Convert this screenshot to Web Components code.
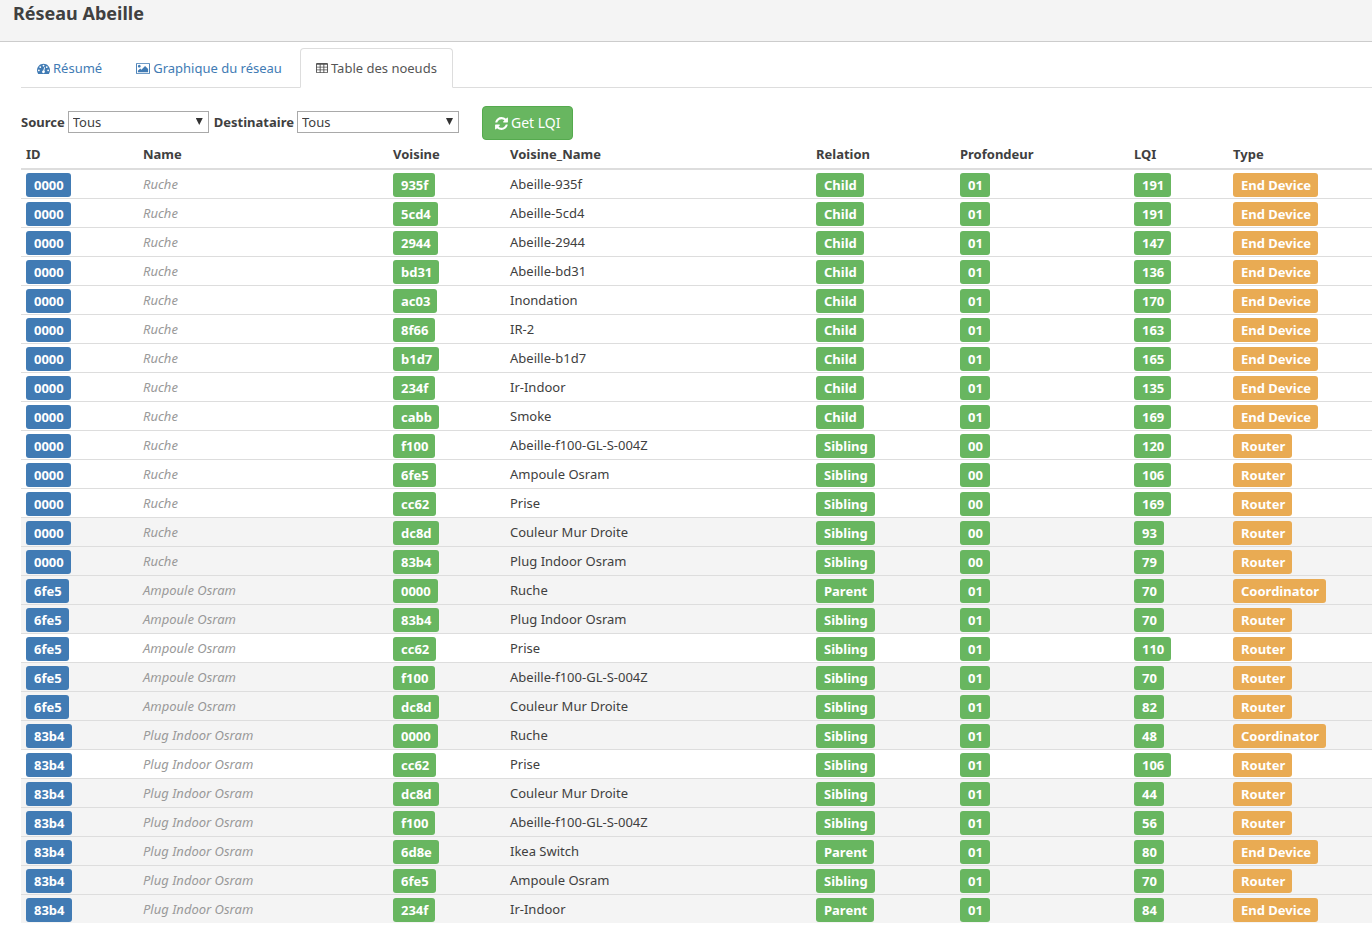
<!DOCTYPE html>
<html lang="fr">
<head>
<meta charset="utf-8">
<title>Réseau Abeille</title>
<style>
body { margin: 0; background: #fff; color: #404040; font: 13px/20px "Noto Sans", "Open Sans", sans-serif; }
</style>
</head>
<body>
<network-page></network-page>
<script>
const ICONS = {
  dashboard: ['0 0 1792 1792', 13, 'M384 1152q0-53-37.5-90.5t-90.5-37.5-90.5 37.5-37.5 90.5 37.5 90.5 90.5 37.5 90.5-37.5 37.5-90.5zm192-448q0-53-37.5-90.5t-90.5-37.5-90.5 37.5-37.5 90.5 37.5 90.5 90.5 37.5 90.5-37.5 37.5-90.5zm428 481l101-382q6-26-7.5-48.5t-38.5-29.5-48 6.5-30 39.5l-101 382q-60 5-107 43.5t-63 98.5q-20 77 20 146t117 89 146-20 89-117q16-60-6-117t-72-91zm660-33q0-53-37.5-90.5t-90.5-37.5-90.5 37.5-37.5 90.5 37.5 90.5 90.5 37.5 90.5-37.5 37.5-90.5zm-640-640q0-53-37.5-90.5t-90.5-37.5-90.5 37.5-37.5 90.5 37.5 90.5 90.5 37.5 90.5-37.5 37.5-90.5zm448 192q0-53-37.5-90.5t-90.5-37.5-90.5 37.5-37.5 90.5 37.5 90.5 90.5 37.5 90.5-37.5 37.5-90.5zm320 448q0 261-141 483-19 29-54 29h-1402q-35 0-54-29-141-221-141-483 0-182 71-348t191-286 286-191 348-71 348 71 286 191 191 286 71 348z'],
  picture: ['64 0 1920 1792', 14, 'M704 576q0 80-56 136t-136 56-136-56-56-136 56-136 136-56 136 56 56 136zm1024 384v448h-1408v-192l320-320 160 160 512-512zm96-704h-1600q-13 0-22.5 9.5t-9.5 22.5v1216q0 13 9.5 22.5t22.5 9.5h1600q13 0 22.5-9.5t9.5-22.5v-1216q0-13-9.5-22.5t-22.5-9.5zm160 32v1216q0 66-47 113t-113 47h-1600q-66 0-113-47t-47-113v-1216q0-66 47-113t113-47h1600q66 0 113 47t47 113z'],
  table: ['64 0 1664 1792', 12, (() => {
    const cell = 'v-192q0-14-9-23t-23-9h-320q-14 0-23 9t-9 23v192q0 14 9 23t23 9h320q14 0 23-9t9-23z';
    let d = '';
    for (const x of [576, 1088, 1600]) for (const y of [608, 992, 1376]) d += `M${x} ${y}${cell}`;
    return d + 'M1728 288v1088q0 66-47 113t-113 47h-1344q-66 0-113-47t-47-113v-1088q0-66 47-113t113-47h1344q66 0 113 47t47 113z';
  })()],
  refresh: ['128 0 1536 1792', 13, 'M1639 1056q0 5-1 7-64 268-268 434.5t-478 166.5q-146 0-282.5-55t-243.5-157l-129 129q-19 19-45 19t-45-19-19-45v-448q0-26 19-45t45-19h448q26 0 45 19t19 45-19 45l-137 137q71 66 161 102t187 36q134 0 250-65t186-179q11-17 53-117 8-23 30-23h192q13 0 22.5 9.5t9.5 22.5zm25-800v448q0 26-19 45t-45 19h-448q-26 0-45-19t-19-45 19-45l138-138q-148-137-349-137-134 0-250 65t-186 179q-11 17-53 117-8 23-30 23h-199q-13 0-22.5-9.5t-9.5-22.5v-7q65-268 270-434.5t480-166.5q146 0 284 55.5t245 156.5l130-129q19-19 45-19t45 19 19 45z']
};

class BaseElement extends HTMLElement {
  connectedCallback() {
    if (this.shadowRoot) return;
    this.attachShadow({ mode: 'open' }).innerHTML = this.render();
  }
}

customElements.define('ui-icon', class extends BaseElement {
  render() {
    const [box, width, path] = ICONS[this.getAttribute('name')];
    const [, , w, h] = box.split(' ').map(Number);
    const height = Math.round(width * h / w);
    return `<style>:host{display:inline-flex}svg{display:block;fill:currentColor}</style>
      <svg viewBox="${box}" width="${width}" height="${height}" aria-hidden="true"><path fill-rule="evenodd" d="${path}"/></svg>`;
  }
});

customElements.define('page-header', class extends BaseElement {
  render() {
    return `<style>
      :host { display: block; background: #f4f4f4; border-bottom: 1px solid #ccc; padding: 1px 13px 16px; }
      h1 { margin: 0; font-size: 18px; line-height: 24px; font-weight: 700; }
    </style><h1><slot></slot></h1>`;
  }
});

customElements.define('nav-tab', class extends BaseElement {
  render() {
    return `<style>
      :host { display: block; margin-bottom: -1px; }
      a { display: flex; align-items: center; gap: 3px; padding: 9px 15px; line-height: 20px; color: #417bb4;
          text-decoration: none; border: 1px solid transparent; border-radius: 4px 4px 0 0; white-space: nowrap; }
      :host([active]) a { color: #555; background: #fff; border-color: #ddd #ddd #fff; }
    </style>
    <a href="#${this.getAttribute('target')}"><ui-icon name="${this.getAttribute('icon')}"></ui-icon><span><slot></slot></span></a>`;
  }
});

customElements.define('nav-tabs', class extends BaseElement {
  render() {
    return `<style>:host { display: flex; gap: 2px; border-bottom: 1px solid #ddd; }</style><slot></slot>`;
  }
});

customElements.define('filter-select', class extends BaseElement {
  render() {
    return `<style>
      :host { display: flex; align-items: center; gap: 3px; margin-bottom: 2px; }
      label { font-weight: 700; }
      .box { position: relative; }
      .box::after { content: ""; position: absolute; right: 6px; top: 7px; width: 7px; height: 7px;
                    background: #333; clip-path: polygon(0 0, 100% 0, 50% 100%); pointer-events: none; }
      select { appearance: none; display: block; width: var(--select-width); height: 22px; margin: 0; padding: 0 20px 0 4px;
               border: 1px solid #a9a9a9; border-radius: 0; background: #fff; color: inherit; font: inherit; }
    </style>
    <label for="choice"><slot></slot></label>
    <span class="box"><select id="choice"><option>Tous</option></select></span>`;
  }
});

customElements.define('action-button', class extends BaseElement {
  render() {
    return `<style>
      :host { display: block; }
      button { display: flex; align-items: center; gap: 3px; height: 34px; margin: 0; padding: 0 11px 0 12px;
               border: 1px solid #55aa4e; border-radius: 4px; background: #68b660; color: #fff; font: inherit; font-size: 14px; }
    </style>
    <button type="button"><ui-icon name="refresh"></ui-icon><span><slot></slot></span></button>`;
  }
});

customElements.define('node-badge', class extends BaseElement {
  render() {
    return `<style>
      :host { display: inline-block; vertical-align: top; padding: 0 7px 0 8px; border-radius: 3px; line-height: 24px;
              color: #fff; font-weight: 700; background: #68b660; white-space: nowrap; }
      :host([kind="source"]) { background: #417bb4; }
      :host([kind="type"]) { background: #e9ab53; }
    </style><slot></slot>`;
  }
});

const NODES = { '0000': 'Ruche', '6fe5': 'Ampoule Osram', '83b4': 'Plug Indoor Osram' };
const LINKS = `0000|935f|Abeille-935f|Child|01|191|End Device
0000|5cd4|Abeille-5cd4|Child|01|191|End Device
0000|2944|Abeille-2944|Child|01|147|End Device
0000|bd31|Abeille-bd31|Child|01|136|End Device
0000|ac03|Inondation|Child|01|170|End Device
0000|8f66|IR-2|Child|01|163|End Device
0000|b1d7|Abeille-b1d7|Child|01|165|End Device
0000|234f|Ir-Indoor|Child|01|135|End Device
0000|cabb|Smoke|Child|01|169|End Device
0000|f100|Abeille-f100-GL-S-004Z|Sibling|00|120|Router
0000|6fe5|Ampoule Osram|Sibling|00|106|Router
0000|cc62|Prise|Sibling|00|169|Router
0000|dc8d|Couleur Mur Droite|Sibling|00|93|Router
0000|83b4|Plug Indoor Osram|Sibling|00|79|Router
6fe5|0000|Ruche|Parent|01|70|Coordinator
6fe5|83b4|Plug Indoor Osram|Sibling|01|70|Router
6fe5|cc62|Prise|Sibling|01|110|Router
6fe5|f100|Abeille-f100-GL-S-004Z|Sibling|01|70|Router
6fe5|dc8d|Couleur Mur Droite|Sibling|01|82|Router
83b4|0000|Ruche|Sibling|01|48|Coordinator
83b4|cc62|Prise|Sibling|01|106|Router
83b4|dc8d|Couleur Mur Droite|Sibling|01|44|Router
83b4|f100|Abeille-f100-GL-S-004Z|Sibling|01|56|Router
83b4|6d8e|Ikea Switch|Parent|01|80|End Device
83b4|6fe5|Ampoule Osram|Sibling|01|70|Router
83b4|234f|Ir-Indoor|Parent|01|84|End Device`.split('\n').map(line => line.split('|'));

customElements.define('node-table', class extends BaseElement {
  render() {
    const badge = (text, kind = 'link') => `<td class="tag"><node-badge kind="${kind}">${text}</node-badge></td>`;
    const rows = LINKS.map(([id, neighbour, name, relation, depth, lqi, type]) =>
      `<tr${lqi < 100 ? ' class="weak"' : ''}>${badge(id, 'source')}<td class="source">${NODES[id]}</td>${badge(neighbour)}<td>${name}</td>${badge(relation)}${badge(depth)}${badge(lqi)}${badge(type, 'type')}</tr>`).join('');
    const heads = ['ID', 'Name', 'Voisine', 'Voisine_Name', 'Relation', 'Profondeur', 'LQI', 'Type'];
    const widths = [117, 250, 117, 306, 144, 174, 99, 144];
    return `<style>
      :host { display: block; }
      table { width: 100%; table-layout: fixed; border-collapse: separate; border-spacing: 0; }
      th { height: 28px; padding: 0 5px; text-align: left; font-weight: 700; border-bottom: 2px solid #ddd; }
      td { height: 28px; padding: 0 5px; border-bottom: 1px solid #ddd; white-space: nowrap; }
      tr:last-child td { border-bottom: 0; }
      .tag { height: 24px; padding: 3px 5px 1px; }
      .source { color: #999; font-style: italic; }
      .weak { background: #f4f4f4; }
    </style>
    <table><colgroup>${widths.map(w => `<col style="width:${w}px">`).join('')}</colgroup>
    <thead><tr>${heads.map(h => `<th scope="col">${h}</th>`).join('')}</tr></thead><tbody>${rows}</tbody></table>`;
  }
});

customElements.define('network-page', class extends BaseElement {
  render() {
    return `<style>
      :host { display: block; }
      main { padding: 6px 0 24px 21px; }
      .filters { display: flex; align-items: center; gap: 5px; margin-top: 18px; }
      .source { --select-width: 141px; }
      .target { --select-width: 162px; }
      action-button { margin-left: 18px; }
    </style>
    <page-header>Réseau Abeille</page-header>
    <main>
      <nav-tabs>
        <nav-tab icon="dashboard" target="resume">Résumé</nav-tab>
        <nav-tab icon="picture" target="graphique">Graphique du réseau</nav-tab>
        <nav-tab icon="table" target="table" active>Table des noeuds</nav-tab>
      </nav-tabs>
      <div class="filters">
        <filter-select class="source">Source</filter-select>
        <filter-select class="target">Destinataire</filter-select>
        <action-button>Get LQI</action-button>
      </div>
      <node-table></node-table>
    </main>`;
  }
});
</script>
</body>
</html>
